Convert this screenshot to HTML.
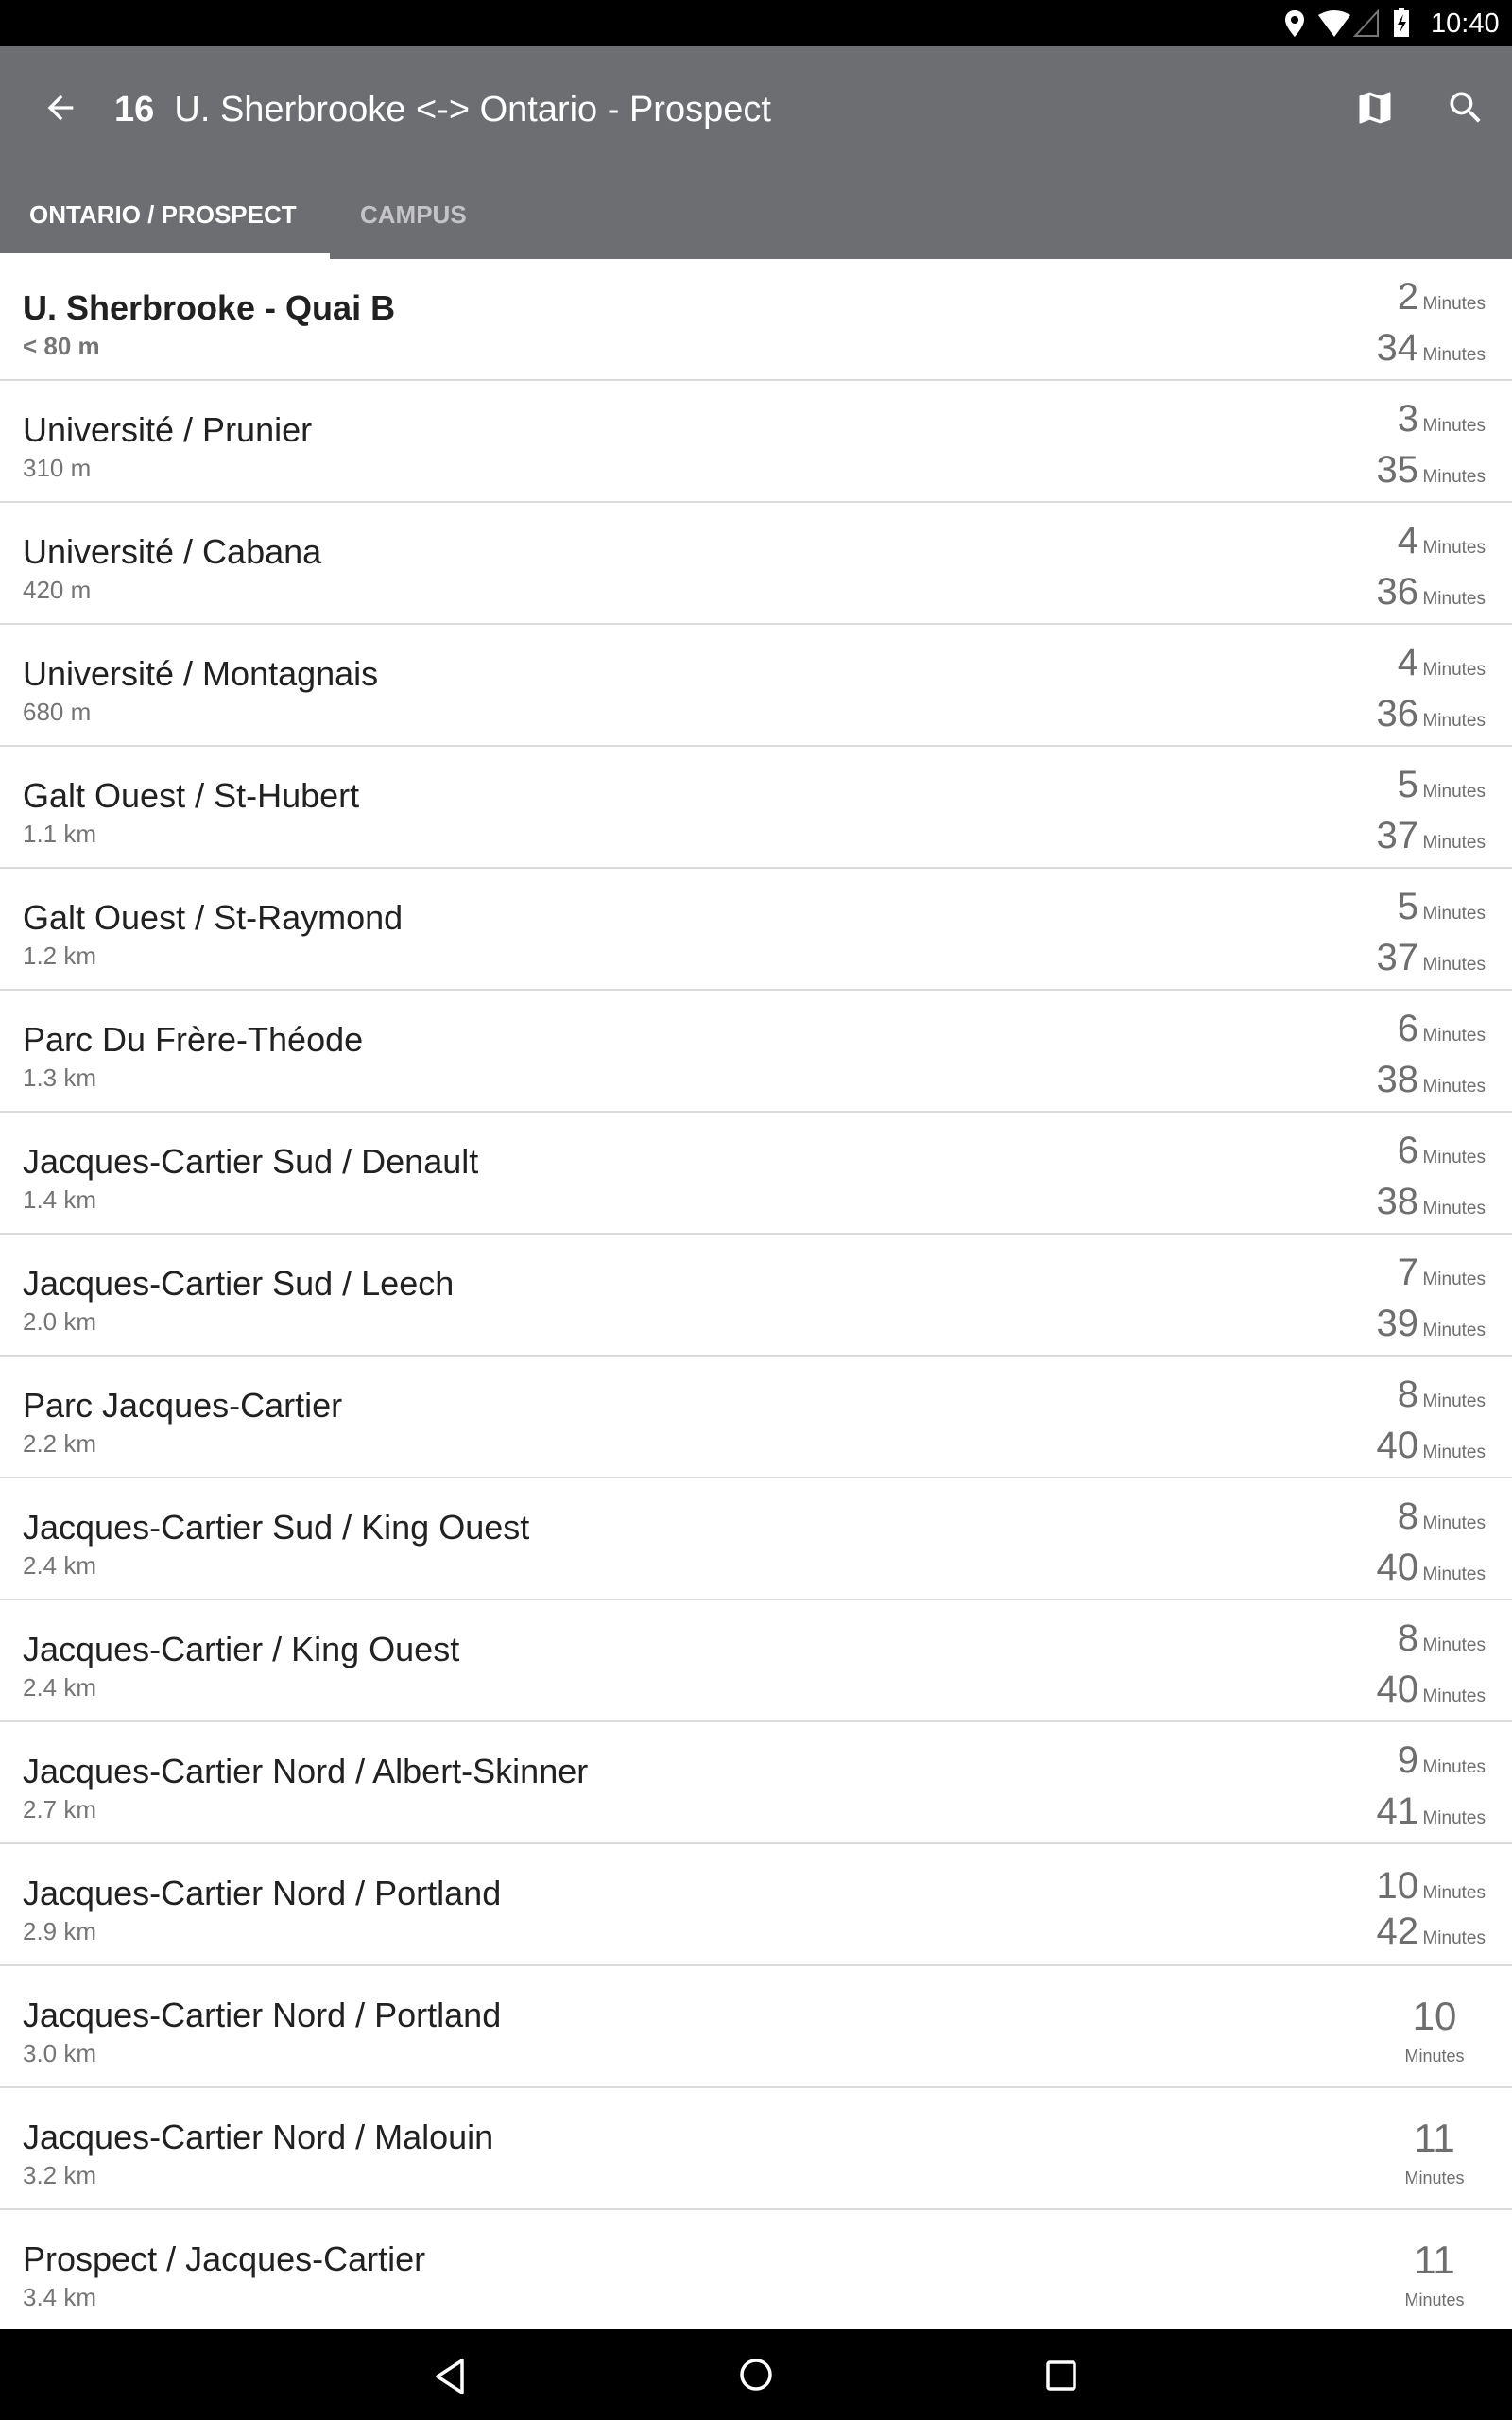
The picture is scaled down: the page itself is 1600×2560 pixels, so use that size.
<!DOCTYPE html>
<html><head><meta charset="utf-8"><style>
*{margin:0;padding:0;box-sizing:border-box}
body{width:1600px;height:2560px;position:relative;background:#fff;font-family:"Liberation Sans",sans-serif;overflow:hidden}
#sb{position:absolute;left:0;top:0;width:1600px;height:49px;background:#000;color:#fff}
#tb{position:absolute;left:0;top:49px;width:1600px;height:225px;background:#6d6e72}
.row{position:absolute;left:0;width:1600px;height:129px;border-bottom:2px solid #dcdcdc}
.nm{position:absolute;left:24px;top:31px;font-size:36px;color:#212121;white-space:nowrap}
.ds{position:absolute;left:24px;top:77px;font-size:26px;color:#757575}
.t{position:absolute;right:28px;color:#6e6e6e;white-space:nowrap;text-align:right}
.t b{font-weight:normal;font-size:40px}
.t i{font-style:normal;font-size:19px}
.c{position:absolute;right:22px;width:120px;text-align:center;color:#6e6e6e}
#nav{position:absolute;left:0;top:2464px;width:1600px;height:96px;background:#000}
</style></head><body>
<div id="sb">
<svg style="position:absolute;left:1358px;top:10px" width="24" height="30" viewBox="0 0 24 30"><path d="M12 1C6 1 2 5 2 11c0 7 10 18 10 18s10-11 10-18C22 5 18 1 12 1z" fill="#fff"/><circle cx="12" cy="11" r="4" fill="#000"/></svg>
<svg style="position:absolute;left:1394px;top:10px" width="36" height="30" viewBox="0 0 36 30"><path d="M1 6Q18-4 35 6L18 29z" fill="#fff"/></svg>
<svg style="position:absolute;left:1432px;top:10px" width="28" height="30" viewBox="0 0 28 30"><path d="M26 2L2 28H26z" fill="none" stroke="#777" stroke-width="2"/></svg>
<svg style="position:absolute;left:1474px;top:8px" width="18" height="32" viewBox="0 0 18 32"><rect x="1" y="3" width="16" height="28" fill="#fff"/><rect x="6" y="0" width="6" height="4" fill="#fff"/><path d="M11 7L5 18h5l-3 9 7-12H9z" fill="#000"/></svg>
<div style="position:absolute;left:1514px;top:9px;font-size:29px">10:40</div>
</div>
<div id="tb">
<svg style="position:absolute;left:44px;top:45px" width="40" height="40" viewBox="0 0 24 24"><path d="M20 11H7.8l5.6-5.6L12 4l-8 8 8 8 1.4-1.4L7.8 13H20z" fill="#fff"/></svg>
<div style="position:absolute;left:121px;top:46px;font-size:38px;color:#fff;white-space:nowrap"><b>16</b>&nbsp; U. Sherbrooke &lt;-&gt; Ontario - Prospect</div>
<svg style="position:absolute;left:1433px;top:43px" width="44" height="44" viewBox="0 0 24 24"><path d="M20.5 3l-.2.0L15 5.1 9 3 3.4 4.9c-.2.1-.4.3-.4.5V20.5c0 .3.2.5.5.5l.2 0L9 18.9l6 2.1 5.6-1.9c.2-.1.4-.3.4-.5V3.5c0-.3-.2-.5-.5-.5zM15 19l-6-2.1V5l6 2.1V19z" fill="#fff"/></svg>
<svg style="position:absolute;left:1529px;top:43px" width="44" height="44" viewBox="0 0 24 24"><path d="M15.5 14h-.8l-.3-.3c1-1.1 1.6-2.6 1.6-4.2C16 5.9 13.1 3 9.5 3S3 5.9 3 9.5 5.9 16 9.5 16c1.6 0 3.1-.6 4.2-1.6l.3.3v.8l5 5 1.5-1.5-5-5zm-6 0C7 14 5 12 5 9.5S7 5 9.5 5 14 7 14 9.5 12 14 9.5 14z" fill="#fff"/></svg>
<div style="position:absolute;left:31px;top:163px;font-size:26px;font-weight:bold;color:#fff">ONTARIO / PROSPECT</div>
<div style="position:absolute;left:381px;top:163px;font-size:26px;font-weight:bold;color:#c4c4c6">CAMPUS</div>
<div style="position:absolute;left:0;top:219px;width:349px;height:6px;background:#fff"></div>
</div>
<div class="row" style="top:274px"><div class="nm" style="font-weight:bold">U. Sherbrooke - Quai B</div><div class="ds" style="font-weight:bold">&lt; 80 m</div><div class="t" style="top:18px"><b>2</b> <i>Minutes</i></div><div class="t" style="top:72px"><b>34</b> <i>Minutes</i></div></div>
<div class="row" style="top:403px"><div class="nm">Université / Prunier</div><div class="ds">310 m</div><div class="t" style="top:18px"><b>3</b> <i>Minutes</i></div><div class="t" style="top:72px"><b>35</b> <i>Minutes</i></div></div>
<div class="row" style="top:532px"><div class="nm">Université / Cabana</div><div class="ds">420 m</div><div class="t" style="top:18px"><b>4</b> <i>Minutes</i></div><div class="t" style="top:72px"><b>36</b> <i>Minutes</i></div></div>
<div class="row" style="top:661px"><div class="nm">Université / Montagnais</div><div class="ds">680 m</div><div class="t" style="top:18px"><b>4</b> <i>Minutes</i></div><div class="t" style="top:72px"><b>36</b> <i>Minutes</i></div></div>
<div class="row" style="top:790px"><div class="nm">Galt Ouest / St-Hubert</div><div class="ds">1.1 km</div><div class="t" style="top:18px"><b>5</b> <i>Minutes</i></div><div class="t" style="top:72px"><b>37</b> <i>Minutes</i></div></div>
<div class="row" style="top:919px"><div class="nm">Galt Ouest / St-Raymond</div><div class="ds">1.2 km</div><div class="t" style="top:18px"><b>5</b> <i>Minutes</i></div><div class="t" style="top:72px"><b>37</b> <i>Minutes</i></div></div>
<div class="row" style="top:1048px"><div class="nm">Parc Du Frère-Théode</div><div class="ds">1.3 km</div><div class="t" style="top:18px"><b>6</b> <i>Minutes</i></div><div class="t" style="top:72px"><b>38</b> <i>Minutes</i></div></div>
<div class="row" style="top:1177px"><div class="nm">Jacques-Cartier Sud / Denault</div><div class="ds">1.4 km</div><div class="t" style="top:18px"><b>6</b> <i>Minutes</i></div><div class="t" style="top:72px"><b>38</b> <i>Minutes</i></div></div>
<div class="row" style="top:1306px"><div class="nm">Jacques-Cartier Sud / Leech</div><div class="ds">2.0 km</div><div class="t" style="top:18px"><b>7</b> <i>Minutes</i></div><div class="t" style="top:72px"><b>39</b> <i>Minutes</i></div></div>
<div class="row" style="top:1435px"><div class="nm">Parc Jacques-Cartier</div><div class="ds">2.2 km</div><div class="t" style="top:18px"><b>8</b> <i>Minutes</i></div><div class="t" style="top:72px"><b>40</b> <i>Minutes</i></div></div>
<div class="row" style="top:1564px"><div class="nm">Jacques-Cartier Sud / King Ouest</div><div class="ds">2.4 km</div><div class="t" style="top:18px"><b>8</b> <i>Minutes</i></div><div class="t" style="top:72px"><b>40</b> <i>Minutes</i></div></div>
<div class="row" style="top:1693px"><div class="nm">Jacques-Cartier / King Ouest</div><div class="ds">2.4 km</div><div class="t" style="top:18px"><b>8</b> <i>Minutes</i></div><div class="t" style="top:72px"><b>40</b> <i>Minutes</i></div></div>
<div class="row" style="top:1822px"><div class="nm">Jacques-Cartier Nord / Albert-Skinner</div><div class="ds">2.7 km</div><div class="t" style="top:18px"><b>9</b> <i>Minutes</i></div><div class="t" style="top:72px"><b>41</b> <i>Minutes</i></div></div>
<div class="row" style="top:1951px"><div class="nm">Jacques-Cartier Nord / Portland</div><div class="ds">2.9 km</div><div class="t" style="top:22px"><b>10</b> <i>Minutes</i></div><div class="t" style="top:70px"><b>42</b> <i>Minutes</i></div></div>
<div class="row" style="top:2080px"><div class="nm">Jacques-Cartier Nord / Portland</div><div class="ds">3.0 km</div><div class="c" style="top:29px;font-size:42px">10</div><div class="c" style="top:85px;font-size:18px">Minutes</div></div>
<div class="row" style="top:2209px"><div class="nm">Jacques-Cartier Nord / Malouin</div><div class="ds">3.2 km</div><div class="c" style="top:29px;font-size:42px">11</div><div class="c" style="top:85px;font-size:18px">Minutes</div></div>
<div class="row" style="top:2338px"><div class="nm">Prospect / Jacques-Cartier</div><div class="ds">3.4 km</div><div class="c" style="top:29px;font-size:42px">11</div><div class="c" style="top:85px;font-size:18px">Minutes</div></div>
<div id="nav">
<svg style="position:absolute;left:458px;top:30px" width="36" height="40" viewBox="0 0 36 40"><path d="M31 3L5 20l26 17z" fill="none" stroke="#fff" stroke-width="3.5" stroke-linejoin="round"/></svg>
<svg style="position:absolute;left:780px;top:28px" width="40" height="40" viewBox="0 0 40 40"><circle cx="20" cy="20" r="15" fill="none" stroke="#fff" stroke-width="3.5"/></svg>
<svg style="position:absolute;left:1106px;top:32px" width="34" height="34" viewBox="0 0 34 34"><rect x="3" y="3" width="28" height="28" rx="2" fill="none" stroke="#fff" stroke-width="3.5"/></svg>
</div>
</body></html>
